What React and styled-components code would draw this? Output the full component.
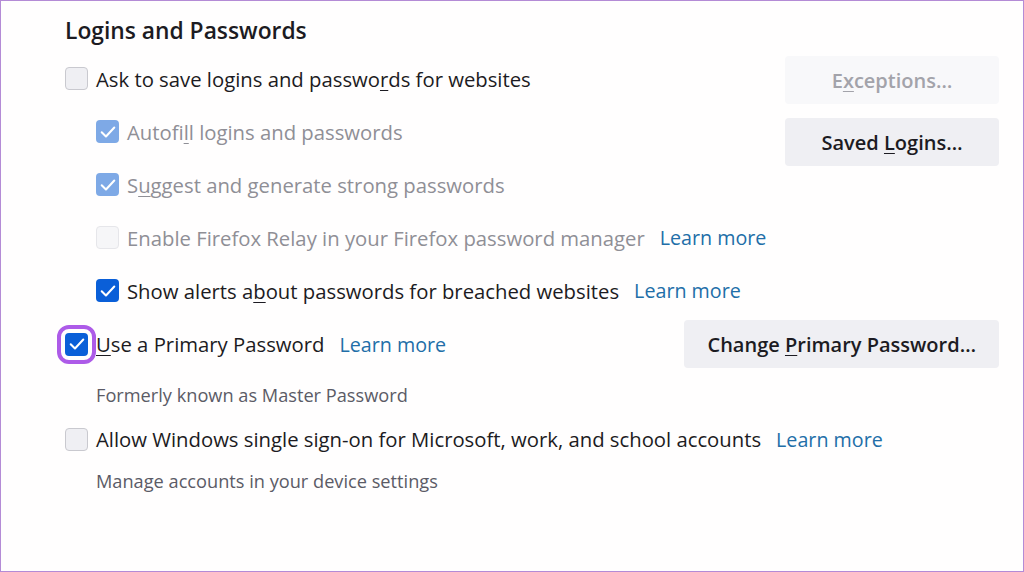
import React from 'react'
import styled, { createGlobalStyle } from 'styled-components'

const GlobalStyle = createGlobalStyle`
  html, body {
    margin: 0;
    padding: 0;
    background: #fff;
  }
  body {
    font-family: "Open Sans", "Noto Sans", sans-serif;
    color: #1c1b22;
  }
`

const Frame = styled.div`
  width: 1024px;
  height: 572px;
  box-sizing: border-box;
  border: 1px solid #b48bd6;
  padding: 0 24px 0 64px;
  background: #fffefe;
  overflow: hidden;
`

const Heading = styled.h2`
  margin: 0;
  height: 51px;
  line-height: 60px;
  font-size: 22.8px;
  font-weight: 600;
  color: #1c1b22;
`

const TopGrid = styled.div`
  display: grid;
  grid-template-columns: 1fr 214px;
`

const List = styled.div`
  display: flex;
  flex-direction: column;
`

const Buttons = styled.div`
  display: flex;
  flex-direction: column;
  gap: 14px;
  padding-top: 4px;
`

const Row = styled.div`
  display: flex;
  align-items: center;
  height: ${p => p.$h || 53}px;
  padding-left: ${p => (p.$indent ? 31 : 0)}px;
  margin-top: ${p => p.$mt || 0}px;
`

const SpaceRow = styled(Row)`
  justify-content: space-between;
`

const Label = styled.span`
  display: flex;
  align-items: center;
  gap: 8px;
  font-size: 20.3px;
  color: ${p => (p.$disabled ? '#8f8f96' : '#1c1b22')};
  white-space: nowrap;
`

const Box = styled.span`
  position: relative;
  flex: none;
  width: 23px;
  height: 23px;
  box-sizing: border-box;
  border-radius: 4px;
  display: flex;
  align-items: center;
  justify-content: center;
  background: ${p =>
    p.$checked ? (p.$disabled ? '#7ea9e6' : '#0a5fd8') : p.$disabled ? '#f6f6f8' : '#efeff3'};
  border: 1px solid
    ${p => (p.$checked ? 'transparent' : p.$disabled ? '#e6e6ea' : '#c9c9cf')};
  outline: ${p => (p.$highlight ? '4px solid #ad5be8' : 'none')};
  outline-offset: 4px;
`

const Link = styled.a`
  margin-left: 15px;
  font-size: 19.7px;
  color: #226ea8;
  text-decoration: none;
  white-space: nowrap;
`

const Key = styled.u`
  text-underline-offset: 3px;
  text-decoration-thickness: 1px;
`

const Button = styled.button`
  height: 48px;
  padding: 0 23px;
  border: none;
  border-radius: 4px;
  font-family: inherit;
  font-size: 20px;
  font-weight: 600;
  background: ${p => (p.$disabled ? '#f8f8fa' : '#efeff3')};
  color: ${p => (p.$disabled ? '#a3a3aa' : '#1c1b22')};
  white-space: nowrap;
`

const Note = styled.div`
  margin-top: ${p => p.$mt}px;
  padding-left: 31px;
  height: 26px;
  line-height: 26px;
  font-size: 18.2px;
  color: #5b5b66;
`

const Check = ({ checked, disabled, highlight }) => (
  <Box $checked={checked} $disabled={disabled} $highlight={highlight}>
    {checked && (
      <svg width="18" height="18" viewBox="0 0 16 16" fill="none">
        <path d="M2.4 8.2 L6.2 12 L13.6 4" stroke="#fff" strokeWidth="1.8" strokeLinecap="round" strokeLinejoin="round" />
      </svg>
    )}
  </Box>
)

export default function App() {
  return (
    <>
      <GlobalStyle />
      <Frame>
        <Heading>Logins and Passwords</Heading>
        <TopGrid>
          <List>
            <Row>
              <Label>
                <Check />
                <span>Ask to save logins and passwo<Key>r</Key>ds for websites</span>
              </Label>
            </Row>
            <Row $indent>
              <Label $disabled>
                <Check checked disabled />
                <span>Autofi<Key>l</Key>l logins and passwords</span>
              </Label>
            </Row>
            <Row $indent>
              <Label $disabled>
                <Check checked disabled />
                <span>S<Key>u</Key>ggest and generate strong passwords</span>
              </Label>
            </Row>
            <Row $indent>
              <Label $disabled>
                <Check disabled />
                <span>Enable Firefox Relay in your Firefox password manager</span>
              </Label>
              <Link href="#">Learn more</Link>
            </Row>
            <Row $indent>
              <Label>
                <Check checked />
                <span>Show alerts a<Key>b</Key>out passwords for breached websites</span>
              </Label>
              <Link href="#">Learn more</Link>
            </Row>
          </List>
          <Buttons>
            <Button $disabled>E<Key>x</Key>ceptions…</Button>
            <Button>Saved <Key>L</Key>ogins…</Button>
          </Buttons>
        </TopGrid>
        <SpaceRow $h={48} $mt={3}>
          <Row $h={48}>
            <Label>
              <Check checked highlight />
              <span><Key>U</Key>se a Primary Password</span>
            </Label>
            <Link href="#">Learn more</Link>
          </Row>
          <Button>Change <Key>P</Key>rimary Password…</Button>
        </SpaceRow>
        <Note $mt={14}>Formerly known as Master Password</Note>
        <Row $h={30} $mt={16}>
          <Label>
            <Check />
            <span>Allow Windows single sign-on for Microsoft, work, and school accounts</span>
          </Label>
          <Link href="#">Learn more</Link>
        </Row>
        <Note $mt={14}>Manage accounts in your device settings</Note>
      </Frame>
    </>
  )
}
